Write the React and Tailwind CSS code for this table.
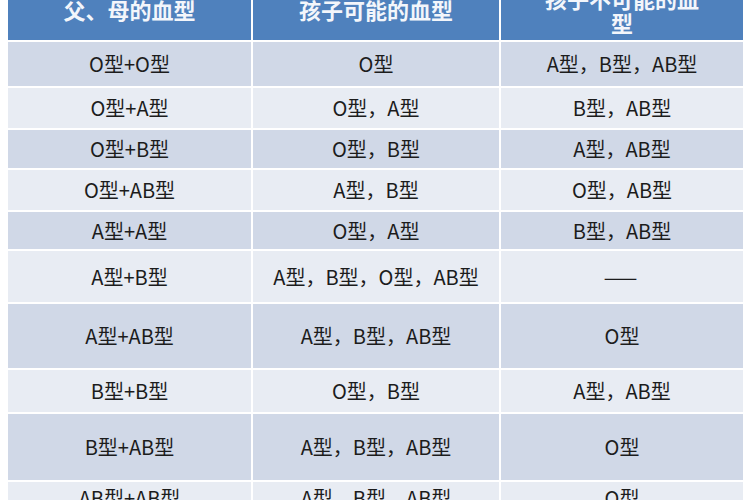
import React from "react";

const rows = [
  { h: "h-[44px]", cells: ["O型+O型", "O型", "A型，B型，AB型"] },
  { h: "h-[40px]", cells: ["O型+A型", "O型，A型", "B型，AB型"] },
  { h: "h-[38px]", cells: ["O型+B型", "O型，B型", "A型，AB型"] },
  { h: "h-[40px]", cells: ["O型+AB型", "A型，B型", "O型，AB型"] },
  { h: "h-[37px]", cells: ["A型+A型", "O型，A型", "B型，AB型"] },
  { h: "h-[51px]", cells: ["A型+B型", "A型，B型，O型，AB型", "——"] },
  { h: "h-[64px]", cells: ["A型+AB型", "A型，B型，AB型", "O型"] },
  { h: "h-[42px]", cells: ["B型+B型", "O型，B型", "A型，AB型"] },
  { h: "h-[66px]", cells: ["B型+AB型", "A型，B型，AB型", "O型"] },
  { h: "h-[32px]", cells: ["AB型+AB型", "A型，B型，AB型", "O型"] },
];

const App = () => {
  return (
    <div
      className="w-[750px] h-[500px] overflow-hidden bg-white"
      style={{ fontFamily: '"Noto Sans CJK SC", "Noto Sans", sans-serif' }}
    >
      {/* table, top of header cut off like the screenshot */}
      <div className="ml-[8px] mt-[-20px] w-[735px] flex flex-col gap-[2px] bg-white">
        {/* header */}
        <div className="grid grid-cols-[243px_246px_242px] gap-[2px] h-[60px]">
          <div className="bg-[#4f81bd] flex items-center justify-center pb-[2px] text-[22px] font-bold text-[#f3f6fb]">
            父、母的血型
          </div>
          <div className="bg-[#4f81bd] flex items-center justify-center pb-[2px] text-[22px] font-bold text-[#f3f6fb]">
            孩子可能的血型
          </div>
          <div className="bg-[#4f81bd] flex items-center justify-center text-[22px] font-bold text-[#f3f6fb]">
            <span className="block text-center leading-[24px]">
              孩子不可能的血
              <br />
              型
            </span>
          </div>
        </div>

        {/* body rows */}
        {rows.map((row, i) => (
          <div
            key={i}
            className={`grid grid-cols-[243px_246px_242px] gap-[2px] ${row.h}`}
          >
            {row.cells.map((c, j) => (
              <div
                key={j}
                className={`${
                  i % 2 === 0 ? "bg-[#d0d8e7]" : "bg-[#e8ecf3]"
                } flex items-center justify-center text-[20px] text-[#1c1c1c] ${
                  c === "——" ? "tracking-[3px]" : ""
                }`}
              >
                {c}
              </div>
            ))}
          </div>
        ))}
      </div>
    </div>
  );
};

export default App;
